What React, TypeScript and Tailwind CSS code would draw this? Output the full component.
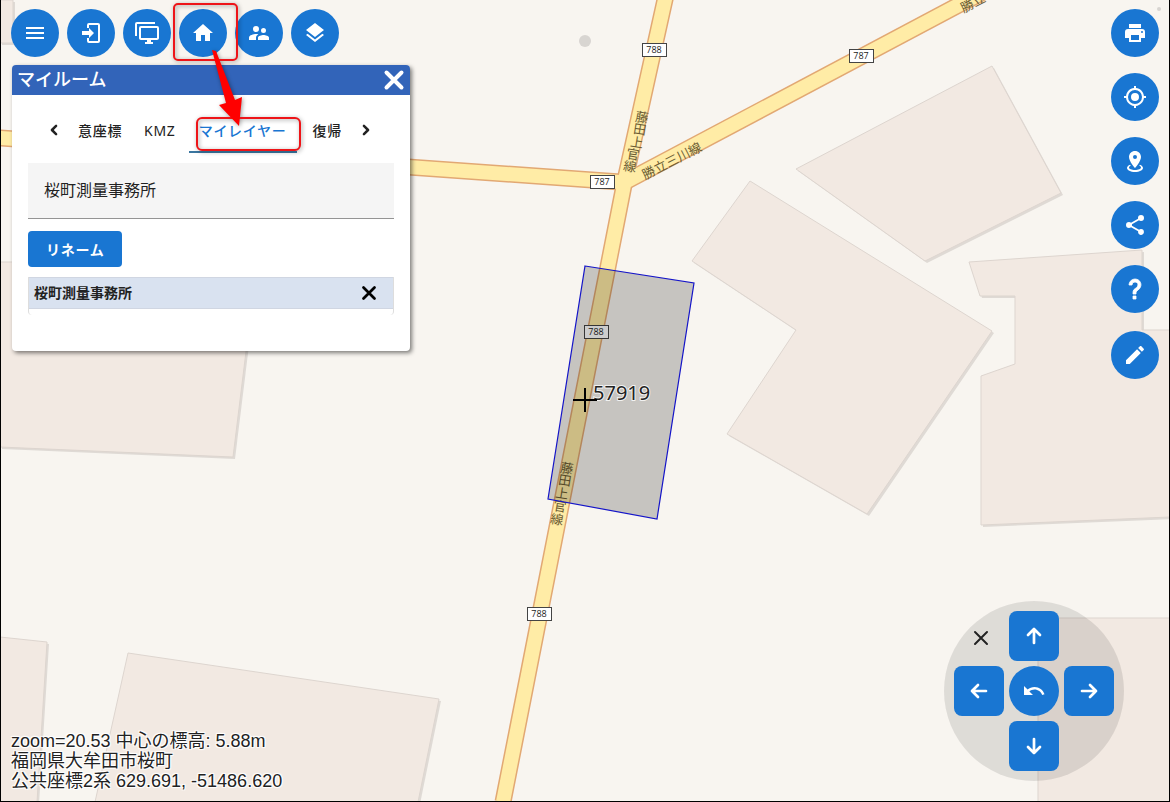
import { useState } from "react";
import type { ReactNode } from "react";

const ICONS = {
  menu: "M3,6H21V8H3V6M3,11H21V13H3V11M3,16H21V18H3V16Z",
  login:
    "M10,17V14H3V10H10V7L15,12L10,17M10,2H19A2,2 0 0,1 21,4V20A2,2 0 0,1 19,22H10A2,2 0 0,1 8,20V17H10V20H19V4H10V7H8V4A2,2 0 0,1 10,2Z",
  monitors:
    "M22,17V7H6V17H22M22,5A2,2 0 0,1 24,7V17C24,18.11 23.1,19 22,19H16V21H18V23H10V21H12V19H6C4.89,19 4,18.11 4,17V7A2,2 0 0,1 6,5H22M2,3V15H0V3A2,2 0 0,1 2,1H20V3H2Z",
  home: "M10,20V14H14V20H19V12H22L12,3L2,12H5V20H10Z",
  people:
    "M16.5,12A2.5,2.5 0 0,0 19,9.5A2.5,2.5 0 0,0 16.5,7A2.5,2.5 0 0,0 14,9.5A2.5,2.5 0 0,0 16.5,12M9,11A3,3 0 0,0 12,8A3,3 0 0,0 9,5A3,3 0 0,0 6,8A3,3 0 0,0 9,11M16.5,14C14.67,14 11,14.92 11,16.75V19H22V16.75C22,14.92 18.33,14 16.5,14M9,13C6.67,13 2,14.17 2,16.5V19H9V16.75C9,15.9 9.33,14.41 11.37,13.28C10.5,13.1 9.66,13 9,13Z",
  layers:
    "M12,16L19.36,10.27L21,9L12,2L3,9L4.63,10.27M12,18.54L4.62,12.81L3,14.07L12,21.07L21,14.07L19.37,12.8L12,18.54Z",
  printer:
    "M18,3H6V7H18M19,12A1,1 0 0,1 18,11A1,1 0 0,1 19,10A1,1 0 0,1 20,11A1,1 0 0,1 19,12M16,19H8V14H16M19,8H5A3,3 0 0,0 2,11V17H6V21H18V17H22V11A3,3 0 0,0 19,8Z",
  gps: "M12,8A4,4 0 0,1 16,12A4,4 0 0,1 12,16A4,4 0 0,1 8,12A4,4 0 0,1 12,8M3.05,13H1V11H3.05C3.5,6.83 6.83,3.5 11,3.05V1H13V3.05C17.17,3.5 20.5,6.83 20.95,11H23V13H20.95C20.5,17.17 17.17,20.5 13,20.95V23H11V20.95C6.83,20.5 3.5,17.17 3.05,13M12,5A7,7 0 0,0 5,12A7,7 0 0,0 12,19A7,7 0 0,0 19,12A7,7 0 0,0 12,5Z",
  marker:
    "M12,2C15.31,2 18,4.66 18,7.95C18,12.41 12,19 12,19C12,19 6,12.41 6,7.95C6,4.66 8.69,2 12,2M12,6A2,2 0 0,0 10,8A2,2 0 0,0 12,10A2,2 0 0,0 14,8A2,2 0 0,0 12,6M20,19C20,21.21 16.42,23 12,23C7.58,23 4,21.21 4,19C4,17.71 5.22,16.56 7.11,15.83L7.75,16.74C6.67,17.19 6,17.81 6,18.5C6,19.88 8.69,21 12,21C15.31,21 18,19.88 18,18.5C18,17.81 17.33,17.19 16.25,16.74L16.89,15.83C18.78,16.56 20,17.71 20,19Z",
  share:
    "M18,16.08C17.24,16.08 16.56,16.38 16.04,16.85L8.91,12.7C8.96,12.47 9,12.24 9,12C9,11.76 8.96,11.53 8.91,11.3L15.96,7.19C16.5,7.69 17.21,8 18,8A3,3 0 0,0 21,5A3,3 0 0,0 18,2A3,3 0 0,0 15,5C15,5.24 15.04,5.47 15.09,5.7L8.04,9.81C7.5,9.31 6.79,9 6,9A3,3 0 0,0 3,12A3,3 0 0,0 6,15C6.79,15 7.5,14.69 8.04,14.19L15.16,18.34C15.11,18.55 15.08,18.77 15.08,19C15.08,20.61 16.39,21.91 18,21.91C19.61,21.91 20.92,20.61 20.92,19A2.92,2.92 0 0,0 18,16.08Z",
  help: "M10,19H13V22H10V19M12,2C17.35,2.22 19.68,7.62 16.5,11.67C15.67,12.67 14.33,13.33 13.67,14.17C13,15 13,16 13,17H10C10,15.33 10,13.92 10.67,12.92C11.33,11.92 12.67,11.33 13.5,10.67C15.92,8.43 15.32,5.26 12,5A3,3 0 0,0 9,8H6A6,6 0 0,1 12,2Z",
  pencil:
    "M20.71,7.04C21.1,6.65 21.1,6 20.71,5.63L18.37,3.29C18,2.9 17.35,2.9 16.96,3.29L15.12,5.12L18.87,8.87M3,17.25V21H6.75L17.81,9.93L14.06,6.18L3,17.25Z",
  undo: "M12.5,8C9.85,8 7.45,9 5.6,10.6L2,7V16H11L7.38,12.38C8.77,11.22 10.54,10.5 12.5,10.5C16.04,10.5 19.08,12.81 20.14,16L22.5,15.22C21.11,11.03 17.15,8 12.5,8Z",
};

const TOOLS: [keyof typeof ICONS, string][] = [
  ["menu", "メニュー"],
  ["login", "ログイン"],
  ["monitors", "画面"],
  ["home", "マイルーム"],
  ["people", "グループ"],
  ["layers", "レイヤー"],
];

const SIDE_TOOLS: [keyof typeof ICONS, string][] = [
  ["printer", "印刷"],
  ["gps", "現在地"],
  ["marker", "地点"],
  ["share", "共有"],
  ["help", "ヘルプ"],
];

const BUILDINGS = [
  "0,0 13,0 13,43 0,43",
  "0,262 257,262 233,457 0,447",
  "0,637 47,642 37,802 0,802",
  "128,653 439,699 418,802 95,802",
  "992,66 1061,193 925,261 796,169",
  "750,181 992,331 867,514 727,434 796,330 692,261",
  "969,262 1142,250 1142,330 1170,330 1170,517 981,525 981,376 1015,364 1015,296 980,296",
  "1038,618 1170,618 1170,802 1038,802",
];

const ROADS = ["M0,138L620,182", "M666,-5L625,180L503,802", "M625,182L985,-9"];

const SHIELDS: [number, number, string][] = [
  [654, 50, "788"],
  [861, 56, "787"],
  [602, 182, "787"],
  [539, 614, "788"],
  [596, 332, "788"],
];

// 道路に沿って一文字ずつ置く路線名
const ROAD_CHARS: [string, number, number][] = [
  ["藤", 642, 117],
  ["田", 640, 129],
  ["上", 637, 142],
  ["官", 633, 154],
  ["線", 630, 166],
  ["藤", 567, 468],
  ["田", 565, 480],
  ["上", 562, 493],
  ["官", 560, 506],
  ["線", 557, 519],
];

function Icon({ name }: { name: keyof typeof ICONS }) {
  return (
    <svg viewBox="0 0 24 24" className="size-6 fill-current" aria-hidden="true">
      <path d={ICONS[name]} stroke="currentColor" strokeWidth={name === "help" ? 0.8 : 0} />
    </svg>
  );
}

function StrokeIcon({ d, className, width = 2 }: { d: string; className: string; width?: number }) {
  return (
    <svg
      viewBox="0 0 24 24"
      className={className}
      fill="none"
      stroke="currentColor"
      strokeWidth={width}
      strokeLinecap="round"
      strokeLinejoin="round"
      aria-hidden="true"
    >
      <path d={d} />
    </svg>
  );
}

function RoundButton({ name, label }: { name: keyof typeof ICONS; label: string }) {
  return (
    <button
      type="button"
      aria-label={label}
      className="flex size-12 items-center justify-center rounded-full bg-[#1976d2] text-white"
    >
      <Icon name={name} />
    </button>
  );
}

function PadButton({ label, className, children }: { label: string; className: string; children: ReactNode }) {
  return (
    <button
      type="button"
      aria-label={label}
      className={`flex size-[50px] items-center justify-center bg-[#1976d2] text-white ${className}`}
    >
      {children}
    </button>
  );
}

function MapCanvas() {
  return (
    <svg
      viewBox="1 0 1168 801"
      preserveAspectRatio="xMidYMid slice"
      className="absolute inset-0 size-full"
      fontFamily='"Noto Sans CJK JP", sans-serif'
    >
      <rect width="1170" height="802" fill="#f8f5f0" />
      {BUILDINGS.map((points) => (
        <g key={points}>
          <polygon points={points} transform="translate(2 2)" fill="#dfdad5" />
          <polygon points={points} fill="#f2e9e2" stroke="#ddd5cf" strokeWidth="1" />
        </g>
      ))}
      <circle cx="585" cy="41" r="6" fill="#d8d5d1" />
      <circle cx="1159" cy="9" r="2" fill="#d8d5d1" />

      {/* 道路 */}
      <g fill="none" strokeLinejoin="round">
        {ROADS.map((d) => (
          <path key={d} d={d} stroke="#e2a873" strokeWidth="17" />
        ))}
        {ROADS.map((d) => (
          <path key={d} d={d} stroke="#ffeca6" strokeWidth="14" />
        ))}
      </g>

      <g fill="#6b5c33" fontSize="13" textAnchor="middle">
        <text transform="translate(674 165) rotate(-27)">勝立三川線</text>
        <text transform="translate(975 7) rotate(-27)">勝立</text>
        {ROAD_CHARS.map(([char, x, y]) => (
          <text key={`${char}-${y}`} transform={`translate(${x} ${y}) rotate(9)`} dy="5">
            {char}
          </text>
        ))}
      </g>

      {SHIELDS.map(([x, y, label]) => (
        <g key={`${x}-${y}`}>
          <rect x={x - 11.5} y={y - 6.5} width="24" height="13" fill="#fff" stroke="#444" />
          <text x={x} y={y + 2.5} textAnchor="middle" fontSize="9" fill="#222" fontFamily='"Open Sans", sans-serif'>
            {label}
          </text>
        </g>
      ))}

      {/* 選択中の区画 */}
      <polygon
        points="585,266 694,283 657,519 548,499"
        fill="#000"
        fillOpacity="0.2"
        stroke="#1414c8"
        strokeWidth="1.2"
      />
      <text
        x="593"
        y="400"
        fontSize="20"
        fill="#222"
        stroke="#fff"
        strokeWidth="2"
        strokeOpacity="0.8"
        paintOrder="stroke"
        fontFamily='"Noto Sans", sans-serif'
      >
        57919
      </text>
      <path d="M573,400H597M585,388V412" stroke="#000" strokeWidth="2" />
    </svg>
  );
}

function MyRoomPanel() {
  const [name, setName] = useState("桜町測量事務所");

  return (
    <section className="relative w-[398px] max-w-full overflow-hidden rounded-[4px] bg-white pb-9 shadow-[2px_2px_4px_rgba(0,0,0,0.5)]">
      <header className="flex h-[30px] items-center justify-between bg-[#3264b9] pr-1 pl-[5px] text-white">
        <h1 className="pb-[2px] text-[18px] leading-6 font-medium">マイルーム</h1>
        <button type="button" aria-label="閉じる">
          <StrokeIcon d="M4.5,4.5L19.5,19.5M19.5,4.5L4.5,19.5" width={4} className="size-6" />
        </button>
      </header>

      <nav className="mx-8 mt-3 flex h-[46px] items-stretch text-[14px] tracking-wider text-[#222]">
        <button type="button" aria-label="前へ" className="flex w-5 items-center justify-center">
          <StrokeIcon d="M14.5,7L9.5,12L14.5,17" width={3} className="size-5" />
        </button>
        <button type="button" className="ml-[14px] font-medium whitespace-nowrap">意座標</button>
        <button type="button" className="ml-[22px]">KMZ</button>
        <button
          type="button"
          className="ml-[13px] w-[108px] border-b-2 border-[#3a76a0] pt-[2px] font-medium whitespace-nowrap text-[#1976d2]"
        >
          マイレイヤー
        </button>
        <button type="button" className="ml-4 font-medium whitespace-nowrap">復帰</button>
        <button type="button" aria-label="次へ" className="ml-[14px] flex w-5 items-center justify-center">
          <StrokeIcon d="M9.5,7L14.5,12L9.5,17" width={3} className="size-5" />
        </button>
      </nav>

      <div className="mx-4 mt-[10px]">
        <input
          aria-label="レイヤー名"
          value={name}
          onChange={(e) => setName(e.target.value)}
          className="block h-14 w-full border-b border-[#949494] bg-[#f5f5f5] px-4 pb-1 text-[16px] text-[#222] outline-none"
        />
        <button
          type="button"
          className="mt-3 flex h-9 items-center rounded-[4px] bg-[#1976d2] px-[18px] text-[14px] font-bold tracking-wider text-white"
        >
          リネーム
        </button>
        <div className="mt-[10px] rounded-b-[4px] border-x border-[#dddddd] pb-[6px]">
          <div className="flex h-8 items-center justify-between border-y border-[#d0d6e2] bg-[#d9e2f0] pr-[13px] pl-[5px]">
            <span className="pb-[2px] text-[14px] font-bold text-[#222]">桜町測量事務所</span>
            <button type="button" aria-label="削除" className="text-black">
              <StrokeIcon d="M6,6L18,18M18,6L6,18" width={3} className="size-[22px]" />
            </button>
          </div>
        </div>
      </div>
    </section>
  );
}

function MovePad() {
  return (
    <div className="grid size-[180px] grid-cols-[50px_50px_50px] place-content-center gap-[5px] rounded-full bg-black/10">
      <button type="button" aria-label="閉じる" className="flex items-center justify-center pt-1 pl-1 text-[#222]">
        <StrokeIcon d="M6,6L18,18M18,6L6,18" className="size-6" />
      </button>
      <PadButton label="上へ" className="rounded-lg">
        <StrokeIcon d="M12,19V5M6,11L12,5L18,11" width={2.7} className="size-6" />
      </PadButton>
      <span />
      <PadButton label="左へ" className="rounded-lg">
        <StrokeIcon d="M19,12H5M11,6L5,12L11,18" width={2.7} className="size-6" />
      </PadButton>
      <PadButton label="元に戻す" className="rounded-full">
        <Icon name="undo" />
      </PadButton>
      <PadButton label="右へ" className="rounded-lg">
        <StrokeIcon d="M5,12H19M13,6L19,12L13,18" width={2.7} className="size-6" />
      </PadButton>
      <span />
      <PadButton label="下へ" className="rounded-lg">
        <StrokeIcon d="M12,5V19M6,13L12,19L18,13" width={2.7} className="size-6" />
      </PadButton>
      <span />
    </div>
  );
}

export default function App() {
  return (
    <div className='relative flex min-h-screen justify-between overflow-hidden border border-t-0 border-black font-["Noto_Sans","Noto_Sans_CJK_JP",sans-serif]'>
      <MapCanvas />

      <div className="relative flex flex-col justify-between pt-[9px] pb-[10px] pl-[10px]">
        <div>
          <div className="flex gap-2">
            {TOOLS.map(([name, label]) => (
              <RoundButton key={name} name={name} label={label} />
            ))}
          </div>
          <div className="mt-2 pl-px">
            <MyRoomPanel />
          </div>
        </div>
        <div className='font-["Liberation_Sans","Noto_Sans_CJK_JP",sans-serif] text-[18px] leading-5 text-[#222] [text-shadow:1px_1px_1px_#fff,-1px_-1px_1px_#fff,1px_-1px_1px_#fff,-1px_1px_1px_#fff]'>
          <p>zoom=20.53 中心の標高: 5.88m</p>
          <p>福岡県大牟田市桜町</p>
          <p>公共座標2系 629.691, -51486.620</p>
        </div>
      </div>

      <div className="relative flex flex-col items-end justify-between pt-[9px] pb-5">
        <div className="flex flex-col gap-[18px] pr-[10px]">
          <div className="flex flex-col gap-4">
            {SIDE_TOOLS.map(([name, label]) => (
              <RoundButton key={name} name={name} label={label} />
            ))}
          </div>
          <RoundButton name="pencil" label="編集" />
        </div>
        <div className="pr-[45px]">
          <MovePad />
        </div>
      </div>

      {/* 操作手順の注釈 */}
      <svg
        viewBox="1 0 320 160"
        className="pointer-events-none absolute top-0 left-0 h-40 w-80 drop-shadow-[1px_1px_2px_rgba(0,0,0,0.4)]"
      >
        <g fill="none" stroke="#ee1418" strokeWidth="2">
          <rect x="174" y="4" width="63" height="56" rx="4" />
          <rect x="197" y="118" width="103" height="32" rx="5" />
        </g>
        <path d="M212,50L216,51L235,100L242,97L239,126L219,105L226,103Z" fill="#f00" />
      </svg>
    </div>
  );
}
